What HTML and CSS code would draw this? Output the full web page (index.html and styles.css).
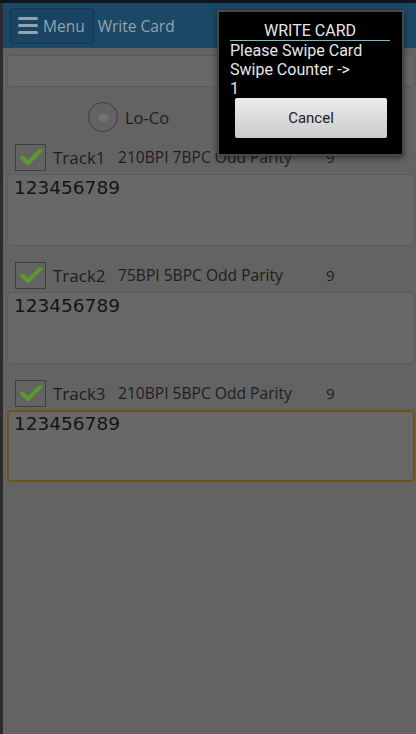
FILE: index.html
```html
<!DOCTYPE html>
<html lang="en">

<head>
    <meta charset="UTF-8">
    <meta name="viewport" content="width=device-width, initial-scale=1.0">
    <title>Write Card</title>
    <link rel="stylesheet" href="styles.css">
</head>

<body>
    <div class="statusbar"></div>
    <div class="app">
        <header class="topnav">
            <button class="menu-btn">
                <span class="burger"><i></i><i></i><i></i></span>
                Menu
            </button>
            <span class="page-title">Write Card</span>
        </header>

        <main class="content">
            <div class="search-bar"></div>

            <div class="coercivity">
                <label class="radio-opt"><span class="radio"><span class="dot"></span></span>Lo-Co</label>
                <span class="radio-opt"></span>
            </div>

            <section class="track">
                <div class="track-head">
                    <span class="check"><svg viewBox="0 0 24 24" width="24" height="24"><path d="M3 12.5 L9 18 L21 6" fill="none" stroke="#5c9a2c" stroke-width="4" stroke-linecap="round" stroke-linejoin="round"/></svg></span>
                    <span class="track-name">Track1</span>
                    <span class="track-spec">210BPI 7BPC Odd Parity</span>
                    <span class="track-len">9</span>
                </div>
                <div class="track-data">123456789</div>
            </section>

            <section class="track">
                <div class="track-head">
                    <span class="check"><svg viewBox="0 0 24 24" width="24" height="24"><path d="M3 12.5 L9 18 L21 6" fill="none" stroke="#5c9a2c" stroke-width="4" stroke-linecap="round" stroke-linejoin="round"/></svg></span>
                    <span class="track-name">Track2</span>
                    <span class="track-spec">75BPI 5BPC Odd Parity</span>
                    <span class="track-len">9</span>
                </div>
                <div class="track-data">123456789</div>
            </section>

            <section class="track">
                <div class="track-head">
                    <span class="check"><svg viewBox="0 0 24 24" width="24" height="24"><path d="M3 12.5 L9 18 L21 6" fill="none" stroke="#5c9a2c" stroke-width="4" stroke-linecap="round" stroke-linejoin="round"/></svg></span>
                    <span class="track-name">Track3</span>
                    <span class="track-spec">210BPI 5BPC Odd Parity</span>
                    <span class="track-len">9</span>
                </div>
                <div class="track-data focused">123456789</div>
            </section>
        </main>
    </div>

    <!-- swipe dialog -->
    <div class="dialog">
        <div class="dialog-title">WRITE CARD</div>
        <p class="dialog-line">Please Swipe Card</p>
        <p class="dialog-line">Swipe Counter -&gt;</p>
        <p class="dialog-line">1</p>
        <button class="cancel-btn">Cancel</button>
    </div>
</body>

</html>
```

FILE: styles.css
```css
body {
    margin: 0;
    background-color: #2c2c2c;
    font-family: "Open Sans", sans-serif;
    color: #1e1e1e;
    height: 734px;
    overflow: hidden;
}

.statusbar {
    height: 3px;
    background-color: #0e151b;
}

.app {
    margin-left: 3px;
    background-color: #636363;
    height: 731px;
}

.topnav {
    height: 45px;
    background-color: #1b4866;
    display: flex;
    align-items: center;
    padding: 0 7px;
    box-sizing: border-box;
}

.menu-btn {
    display: flex;
    align-items: center;
    gap: 5px;
    height: 36px;
    padding: 0 8px 0 7px;
    background-color: #1a4461;
    border: 1px solid #15384f;
    border-radius: 3px;
    color: #93a3b0;
    font-family: "Open Sans", sans-serif;
    font-size: 15.5px;
}

.burger {
    display: flex;
    flex-direction: column;
    gap: 4px;
}

.burger i {
    display: block;
    width: 20px;
    height: 3px;
    border-radius: 2px;
    background-color: #93a3b0;
}

.page-title {
    margin-left: 4px;
    color: #93a3b0;
    font-size: 15.5px;
}

.content {
    padding: 7px 1px 0 4px;
}

.search-bar {
    height: 32px;
    background-color: #686868;
    border: 1px solid #5a5a5a;
    border-radius: 4px;
    box-sizing: border-box;
}

.coercivity {
    display: grid;
    grid-template-columns: 1fr 1fr;
    height: 40px;
    align-items: center;
    margin-top: 10px;
    padding-left: 81px;
}

.radio-opt {
    display: flex;
    align-items: center;
    gap: 7px;
    font-size: 16.5px;
}

.radio {
    width: 30px;
    height: 30px;
    border: 1.5px solid #3d3d3d;
    border-radius: 50%;
    box-sizing: border-box;
    display: flex;
    align-items: center;
    justify-content: center;
}

.dot {
    width: 11px;
    height: 10px;
    border-radius: 50%;
    background-color: #747474;
    box-shadow: inset 0 1px 2px #585858;
}

.track {
    margin-top: 5px;
}

.track + .track {
    margin-top: 14px;
}

.track-head {
    display: flex;
    align-items: center;
    height: 30px;
    margin-bottom: 2px;
    padding-left: 8px;
}

.check {
    width: 31px;
    height: 27px;
    border: 1.5px solid #3f3f3f;
    box-sizing: border-box;
    display: flex;
    align-items: center;
    justify-content: center;
    margin-right: 7px;
}

.track-name {
    font-size: 17px;
    width: 65px;
}

.track-spec {
    font-size: 15.6px;
    width: 208px;
}

.track-len {
    font-size: 15px;
}

.track-data {
    height: 72px;
    background-color: #686868;
    border: 1px solid #5b5b5b;
    border-radius: 4px;
    box-sizing: border-box;
    padding: 2px 6px 0;
    font-family: "DejaVu Sans", sans-serif;
    font-size: 18.5px;
    color: #151515;
}

.track-data.focused {
    border: 2px solid #6e5418;
    padding: 1px 5px 0;
}

.dialog {
    position: absolute;
    left: 217px;
    top: 10px;
    width: 187px;
    height: 146px;
    box-sizing: border-box;
    background-color: #000;
    border: 2px solid #474747;
    box-shadow: 0 2px 6px rgba(0, 0, 0, 0.5);
    padding: 10px 12px 0 11px;
    font-family: Roboto, sans-serif;
    color: #e6e6e6;
    font-size: 16px;
}

.dialog-title {
    text-align: center;
    line-height: 18px;
    border-bottom: 1.5px solid #5cc8c8;
}

.dialog-line {
    margin: 0;
    line-height: 19px;
}

.cancel-btn {
    display: block;
    width: 152px;
    height: 40px;
    margin: 0 0 0 5px;
    border: none;
    border-radius: 2px;
    background: linear-gradient(#ececec, #cbcbcb);
    font-family: Roboto, sans-serif;
    font-size: 15px;
    color: #222;
}
```
